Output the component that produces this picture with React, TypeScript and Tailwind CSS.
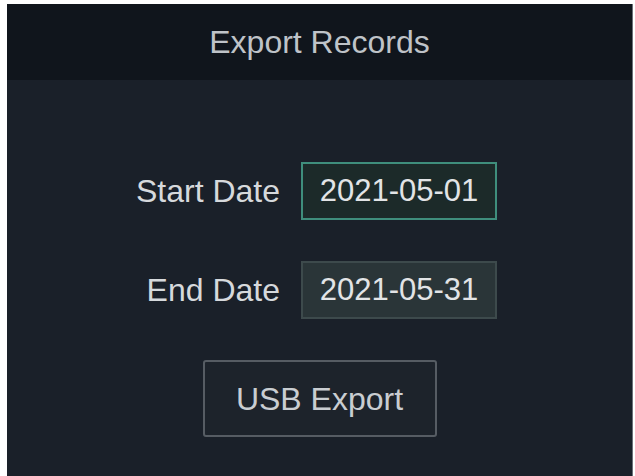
export default function App() {
  const font = { fontFamily: '"Liberation Sans", Arial, sans-serif' };
  return (
    <div className="h-[476px] w-[635px] bg-white pl-[7px] pt-[4px] pr-[2px]" style={font}>
      <div className="flex h-[472px] flex-col border-r border-[#6b7078] bg-[#1a2029]">
        <div className="flex h-[76px] items-center justify-center bg-[#10151c] text-[32px] text-[#bfc3c8]">
          Export Records
        </div>
        <div className="flex flex-col items-center pt-[82px]">
          <div className="mr-[6px] grid grid-cols-[auto_196px] items-center gap-x-[21px] gap-y-[41px]">
            <span className="text-right text-[32px] text-[#d6d9dc]">Start Date</span>
            <div className="flex h-[58px] items-center justify-center border-2 border-[#3f8e7c] bg-[#1c2a29] text-[31px] text-[#e2e4e6]">
              2021-05-01
            </div>
            <span className="text-right text-[32px] text-[#d6d9dc]">End Date</span>
            <div className="flex h-[58px] items-center justify-center border-2 border-[#3d4a4c] bg-[#2a3538] text-[31px] text-[#e2e4e6]">
              2021-05-31
            </div>
          </div>
          <button className="mt-[41px] flex h-[77px] w-[234px] items-center justify-center rounded-[3px] border-2 border-[#565c63] bg-[#1d232b] text-[32px] text-[#c9cdd1]">
            USB Export
          </button>
        </div>
      </div>
    </div>
  );
}
